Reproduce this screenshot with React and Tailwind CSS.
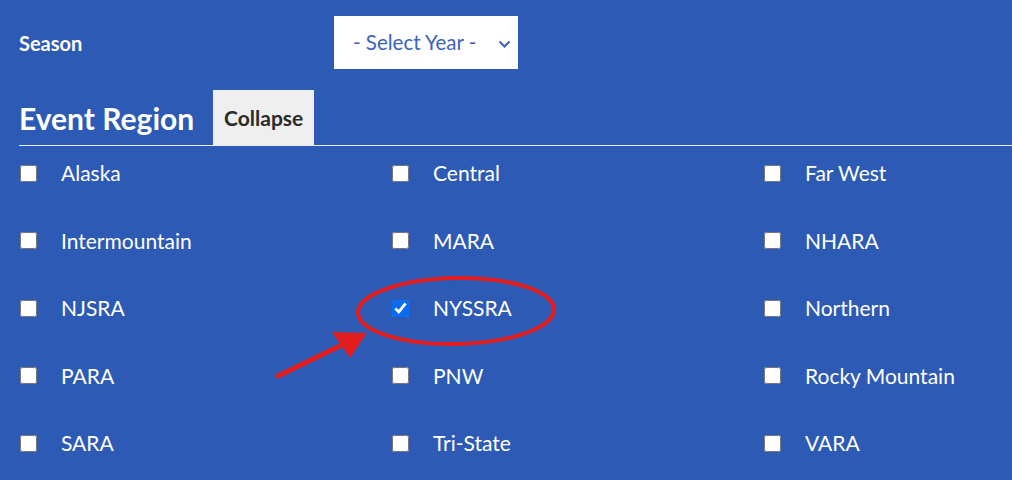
import { useState } from "react";

const regions = [
  "Alaska", "Central", "Far West",
  "Intermountain", "MARA", "NHARA",
  "NJSRA", "NYSSRA", "Northern",
  "PARA", "PNW", "Rocky Mountain",
  "SARA", "Tri-State", "VARA",
];

const App = () => {
  const [checked, setChecked] = useState({ NYSSRA: true });

  return (
    <div
      className="relative w-[1012px] h-[480px] overflow-hidden bg-[#2d5ab5] text-white"
      style={{ fontFamily: "Lato, 'Open Sans', sans-serif" }}
    >
      {/* Season */}
      <div className="flex items-center pl-[19px] pt-[16px] h-[69px]">
        <span className="w-[315px] text-[20px] font-bold">Season</span>
        <div className="relative w-[184px] h-[53px] bg-white">
          <select className="appearance-none w-full h-full bg-white pl-[19px] text-[20.5px] text-[#3b62bd] outline-none">
            <option>- Select Year -</option>
          </select>
          <svg
            className="absolute right-[7px] top-[24px] pointer-events-none"
            width="13"
            height="8"
            viewBox="0 0 13 8"
          >
            <path d="M1.5 1.5 L6.5 6.5 L11.5 1.5" fill="none" stroke="#3b62bd" strokeWidth="2" />
          </svg>
        </div>
      </div>

      {/* Event Region header */}
      <div className="flex items-center pl-[19px] mt-[21px] h-[55px]">
        <h2 className="text-[30px] font-bold mr-[19px] leading-none">Event Region</h2>
        <button className="h-[55px] w-[101px] bg-[#efefef] text-[#2b2b2b] text-[21px] font-bold">
          Collapse
        </button>
      </div>
      <div className="ml-[19px] h-px bg-white/90" />

      {/* Regions */}
      <div className="grid grid-cols-[372px_372px_372px] pl-[19px] pt-[15px]">
        {regions.map((r) => (
          <label key={r} className="flex items-start h-[67.5px] cursor-pointer">
            <span className="flex items-center h-[24px]">
              <input
                type="checkbox"
                checked={!!checked[r]}
                onChange={() => setChecked({ ...checked, [r]: !checked[r] })}
                className="w-[17px] h-[17px] m-0 ml-[1px] accent-[#0b6cf0]"
              />
              <span className="ml-[24px] text-[21px] leading-[24px] whitespace-nowrap">{r}</span>
            </span>
          </label>
        ))}
      </div>

      {/* Annotation */}
      <svg className="absolute left-0 top-0 pointer-events-none" width="1012" height="480">
        <ellipse cx="456" cy="311" rx="98" ry="33" fill="none" stroke="#e21d1d" strokeWidth="4" transform="rotate(-1 456 311)" />
        <line x1="278" y1="376" x2="348" y2="342" stroke="#e21d1d" strokeWidth="5" strokeLinecap="round" />
        <polygon points="367,333 332,332 350,358" fill="#e21d1d" />
      </svg>
    </div>
  );
};

export default App;
